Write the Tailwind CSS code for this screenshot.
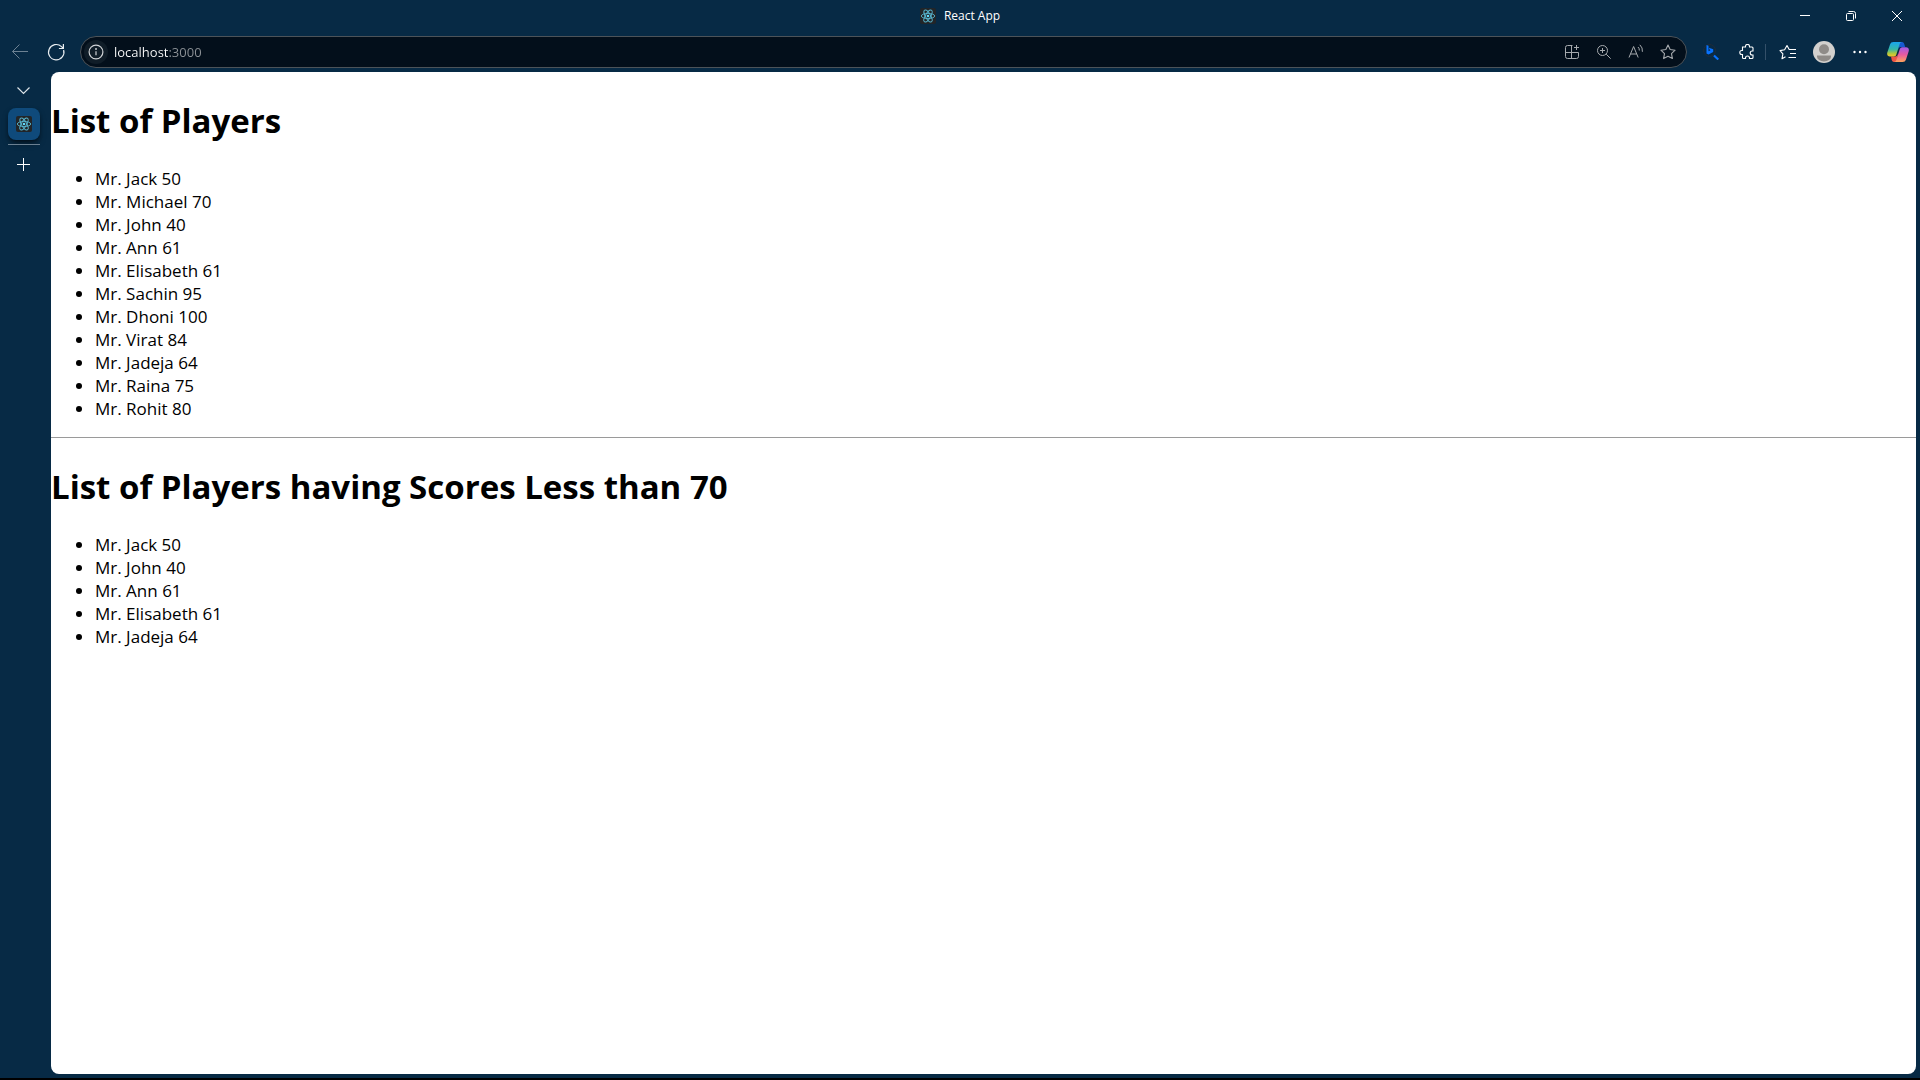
<!DOCTYPE html>
<html lang="en">
<head>
<meta charset="utf-8">
<meta name="viewport" content="width=device-width, initial-scale=1">
<title>React App</title>
<script src="https://cdn.jsdelivr.net/npm/@tailwindcss/browser@4"></script>
</head>
<body class="flex h-screen flex-col overflow-hidden border-b-2 border-black bg-[#072a45] font-['Segoe_UI','Open_Sans',sans-serif] text-white">
<svg class="hidden" aria-hidden="true">
  <symbol id="react" viewBox="0 0 16 16">
    <rect width="16" height="16" rx="2" fill="#222528"/>
    <g fill="none" stroke="#58b7d0" stroke-width="0.9">
      <ellipse cx="8" cy="8" rx="6.7" ry="2.6"/>
      <ellipse cx="8" cy="8" rx="6.7" ry="2.6" transform="rotate(60 8 8)"/>
      <ellipse cx="8" cy="8" rx="6.7" ry="2.6" transform="rotate(120 8 8)"/>
    </g>
    <circle cx="8" cy="8" r="1.3" fill="#61dafb"/>
  </symbol>
</svg>

<!-- Title bar -->
<header class="grid h-8 shrink-0 grid-cols-[1fr_auto_1fr] items-center">
  <span></span>
  <div class="flex items-center gap-2">
    <svg class="size-4"><use href="#react"/></svg>
    <span class="text-xs">React App</span>
  </div>
  <div class="flex justify-end">
    <button aria-label="Minimize" class="flex h-8 w-[46px] items-center justify-center"><svg class="h-3 w-3" viewBox="0 0 12 12" fill="none" stroke="#fff"><path d="M1 5.500h10"/></svg></button>
    <button aria-label="Restore" class="flex h-8 w-[46px] items-center justify-center"><svg class="h-3 w-3" viewBox="0 0 12 12" fill="none" stroke="#fff"><rect x="1.500" y="3.500" width="7" height="7" rx="1"/><path d="M3.500 1.500h5a2 2 0 0 1 2 2v5"/></svg></button>
    <button aria-label="Close" class="flex h-8 w-[46px] items-center justify-center"><svg class="h-3 w-3" viewBox="0 0 12 12" fill="none" stroke="#fff"><path d="M1 1l10 10M11 1L1 11"/></svg></button>
  </div>
</header>

<!-- Toolbar -->
<nav class="flex h-10 shrink-0 items-center pr-1 pl-0.5">
  <button aria-label="Back" class="flex size-9 items-center justify-center text-[#6d8293]"><svg class="size-5" viewBox="0 0 20 20" fill="none" stroke="currentColor"><path d="M18 9.500H2.500M9.500 2.500l-7 7 7 7"/></svg></button>
  <button aria-label="Refresh" class="flex h-9 w-9 items-center justify-center text-[#e8edf1]"><svg class="size-5" viewBox="0 0 20 20" fill="none" stroke="currentColor" stroke-width="1.200"><path d="M17.600 8A7.700 7.700 0 1 1 15.500 4.600L17.200 6.200M17.400 2v4.500h-4.500"/></svg></button>
  <form class="ml-1.5 flex h-8 flex-1 items-center rounded-full border border-[#4c5359] bg-[#030f1b] pr-0.5 pl-[3px]">
    <button type="button" aria-label="Site information" class="flex size-6 items-center justify-center rounded-full bg-[#101d28] text-[#d0d3d6]"><svg class="size-4" viewBox="0 0 16 16" fill="none" stroke="currentColor" stroke-width="1.200"><circle cx="8" cy="8" r="6.900"/><path d="M8 7.200v4"/><circle cx="8" cy="5" r=".4"/></svg></button>
    <input aria-label="Address" value="localhost:3000" class="ml-[5px] min-w-0 flex-1 bg-linear-to-r from-white from-[55px] to-[#8d9297] to-[55px] bg-clip-text pl-px text-[13px] leading-5 text-transparent outline-none">
    <div class="flex items-center text-[#a6aaae]">
      <button type="button" aria-label="App available" class="flex h-7 w-8 items-center justify-center"><svg class="size-4" viewBox="0 0 16 16" fill="none" stroke="currentColor"><path d="M8.500 1.500h-5a2 2 0 0 0-2 2v9a2 2 0 0 0 2 2h9a2 2 0 0 0 2-2v-4M7.500 1.500v13M1.500 8.500h13M12.500 1v5M10 3.500h5"/></svg></button>
      <button type="button" aria-label="Zoom" class="flex h-7 w-8 items-center justify-center"><svg class="size-4" viewBox="0 0 16 16" fill="none" stroke="currentColor"><circle cx="6.500" cy="6.500" r="5"/><path d="M10.200 10.200l4.500 4.500M6.500 4v5M4 6.500h5"/></svg></button>
      <button type="button" aria-label="Read aloud" class="flex h-7 w-8 items-center justify-center"><svg class="size-4" viewBox="0 0 16 16" fill="none" stroke="currentColor"><path d="M1 13.500L5.600 2.500 10.200 13.500M2.500 10h6.200M10 3a4 4 0 0 1 1.300 3.500M11.800 .8a8 8 0 0 1 2.600 7"/></svg></button>
      <button type="button" aria-label="Add to favorites" class="flex h-7 w-8 items-center justify-center"><svg class="size-4" viewBox="0 0 16 16" fill="none" stroke="currentColor" stroke-width="1.100" stroke-linejoin="round"><path d="M8 1l2.150 4.500 4.950.7-3.600 3.450.9 4.900L8 12.200l-4.400 2.350.9-4.900L.9 6.200l4.950-.7z"/></svg></button>
    </div>
  </form>
  <div class="flex items-center pl-1.5">
    <button aria-label="Bing visual search" class="flex h-9 w-9 items-center justify-center"><svg class="size-4" viewBox="0 0 16 16" fill="none"><circle cx="6.500" cy="6.500" r="6" stroke="#202c38"/><path d="M3.500 1l2 .8v5.400l2-1-1-.6-.6-1.900 4.300 1.600v2.600l-4.700 2.700-2-1.200z" fill="#0872ff"/><path d="M11 11.500l4.300 4" stroke="#0872ff" stroke-width="2.200"/></svg></button>
    <button aria-label="Extensions" class="flex h-9 w-9 items-center justify-center"><svg class="size-4" viewBox="0 0 16 16" fill="none" stroke="#fff" stroke-width="1.100"><path d="M3.500 3h3v-.6a2 2 0 0 1 4 0V3h2.500a1 1 0 0 1 1 1v3h-.8a2 2 0 0 0 0 4h.8v2.500a1 1 0 0 1-1 1h-2.500V14a2 2 0 0 0-4 0v.5h-2a1 1 0 0 1-1-1V10.500h-.7a2 2 0 0 1 0-4h.7z"/></svg></button>
    <span class="mr-1 h-4 w-px bg-[#345069]"></span>
    <button aria-label="Favorites" class="flex h-9 w-9 items-center justify-center"><svg class="h-4 w-[18px]" viewBox="0 0 18 16" fill="none" stroke="#fff" stroke-width="1.100" stroke-linejoin="round"><path d="M6.500 12.800L3 14.700l.9-4.800L1 6.600l4.600-.8L8 1.500l2.200 4H17M11 9.500h6M9.500 13.500H17"/></svg></button>
    <button aria-label="Profile" class="flex h-9 w-9 items-center justify-center"><svg class="size-[22px]" viewBox="0 0 22 22"><circle cx="11" cy="11" r="11" fill="#d2d0ce"/><circle cx="11" cy="8.200" r="5" fill="#8f8b88"/><path d="M4 14.500h14v1a7 5 0 0 1-14 0z" fill="#8f8b88"/></svg></button>
    <button aria-label="Settings and more" class="flex h-9 w-9 items-center justify-center"><svg class="size-4" viewBox="0 0 16 16" fill="#fff"><circle cx="2.500" cy="8" r="1.200"/><circle cx="8" cy="8" r="1.200"/><circle cx="13.500" cy="8" r="1.200"/></svg></button>
    <button aria-label="Copilot" class="ml-0.5 flex h-9 w-9 items-center justify-center"><svg class="size-[22px]" viewBox="0 0 22 22">
      <defs>
        <linearGradient id="ca" x1="0" y1="0" x2="0" y2="1"><stop offset="0" stop-color="#18a5f0"/><stop offset=".5" stop-color="#35b7a8"/><stop offset=".8" stop-color="#b5c93a"/><stop offset="1" stop-color="#f5c52d"/></linearGradient>
        <linearGradient id="cb" x1="0" y1="0" x2="0" y2="1"><stop offset="0" stop-color="#a05bea"/><stop offset=".5" stop-color="#e85aa0"/><stop offset="1" stop-color="#ffa45c"/></linearGradient>
      </defs>
      <path d="M12 1h3c1.500 0 2 1 2.400 2.500L18.200 6H14c-2 0-2.500 1-3 3z" fill="#1659d1"/>
      <path d="M10 21H7c-1.500 0-2-1-2.400-2.500L4 15.500h4c2 0 2.500-1 3-3z" fill="#ee5545"/>
      <path d="M6.500 1H15c-1.500 0-2 1-2.500 2.500L9.500 13c-.5 1.800-1.300 2.500-2.800 2.500H3C.8 15.500-.3 14 .3 11.500L3 3.500C3.600 1.800 4.700 1 6.500 1z" fill="url(#ca)"/>
      <path d="M15.500 21H7c1.500 0 2-1 2.500-2.500L12.500 9c.5-1.800 1.300-2.800 2.800-2.800H19c2.200 0 3.300 1.500 2.700 4L19 18.500c-.6 1.700-1.700 2.500-3.500 2.500z" fill="url(#cb)"/>
    </svg></button>
  </div>
</nav>

<div class="flex min-h-0 flex-1 pr-1 pb-1">
  <!-- Vertical tabs -->
  <aside class="flex w-[51px] shrink-0 flex-col items-start pl-2">
    <button aria-label="Tab actions" class="flex h-9 w-8 items-center justify-center"><svg class="size-4" viewBox="0 0 16 16" fill="none" stroke="#dce3e8" stroke-width="1.200"><path d="M1.500 5.500L7.500 11.500l6-6"/></svg></button>
    <button aria-label="React App" class="flex size-8 items-center justify-center rounded-lg bg-[#0f4a7b] shadow-md shadow-black/50"><svg class="size-4"><use href="#react"/></svg></button>
    <span class="mt-1 h-px w-8 bg-[#6b8091]"></span>
    <button aria-label="New tab" class="mt-[3px] flex h-8 w-8 items-center justify-center"><svg class="size-4" viewBox="0 0 16 16" fill="none" stroke="#fff"><path d="M1 8.500h13M7.500 2v13"/></svg></button>
  </aside>

  <!-- Page -->
  <main class="flex-1 overflow-hidden rounded-lg bg-white text-[17px] leading-[23px] text-black">
    <h1 class="mt-[26px] mb-[23px] text-[33px] leading-[46px] font-bold">List of Players</h1>
    <ul class="mb-[17px] list-disc pl-11">
      <li>Mr. Jack 50</li>
      <li>Mr. Michael 70</li>
      <li>Mr. John 40</li>
      <li>Mr. Ann 61</li>
      <li>Mr. Elisabeth 61</li>
      <li>Mr. Sachin 95</li>
      <li>Mr. Dhoni 100</li>
      <li>Mr. Virat 84</li>
      <li>Mr. Jadeja 64</li>
      <li>Mr. Raina 75</li>
      <li>Mr. Rohit 80</li>
    </ul>
    <hr class="border-[#9a9a9a]">
    <h1 class="mt-[26px] mb-[23px] text-[33px] leading-[46px] font-bold">List of Players having Scores Less than 70</h1>
    <ul class="list-disc pl-11">
      <li>Mr. Jack 50</li>
      <li>Mr. John 40</li>
      <li>Mr. Ann 61</li>
      <li>Mr. Elisabeth 61</li>
      <li>Mr. Jadeja 64</li>
    </ul>
  </main>
</div>
</body>
</html>
